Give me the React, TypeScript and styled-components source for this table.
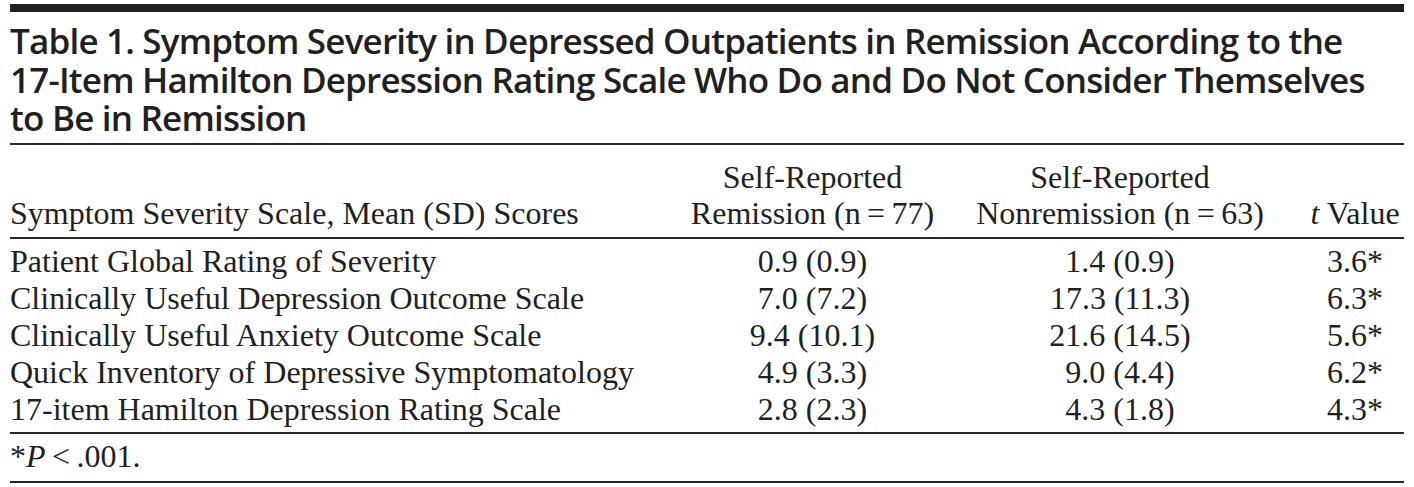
import styled, { createGlobalStyle } from "styled-components";

// page reset
const GlobalStyle = createGlobalStyle`
  html, body {
    margin: 0;
    padding: 0;
    background: #ffffff;
  }
`;

const Page = styled.div`
  padding: 4px 10px 0;
  color: #231f20;
`;

const TopBar = styled.div`
  height: 8px;
  background: #231f20;
`;

const Title = styled.h1`
  margin: 10px 0 0;
  padding-bottom: 5.5px;
  font-family: "Open Sans", "Liberation Sans", sans-serif;
  font-weight: 600;
  font-size: 35px;
  line-height: 38.5px;
  letter-spacing: -0.8px;
  white-space: nowrap;
  border-bottom: 2px solid #2a2627;
`;

const Table = styled.table`
  width: 100%;
  border-collapse: collapse;
  table-layout: fixed;
  font-family: "Liberation Serif", "Times New Roman", serif;
  font-size: 32px;
  color: #231f20;
`;

const Col = styled.col<{ $w: number }>`
  width: ${(p) => p.$w}px;
`;

const HeadCell = styled.th<{ $align?: string; $padRight?: number }>`
  vertical-align: bottom;
  font-weight: normal;
  line-height: 36px;
  padding: 14px ${(p) => p.$padRight ?? 0}px 6px 0;
  text-align: ${(p) => p.$align ?? "center"};
  border-bottom: 2px solid #2a2627;
  white-space: nowrap;
`;

const Row = styled.tr<{ $first?: boolean; $last?: boolean }>`
  td {
    padding-top: ${(p) => (p.$first ? 3.7 : 0)}px;
    padding-bottom: ${(p) => (p.$last ? 4.3 : 0)}px;
    border-bottom: ${(p) => (p.$last ? "2px solid #2a2627" : "none")};
  }
`;

const Cell = styled.td<{ $align?: string; $padRight?: number }>`
  line-height: 37px;
  padding-left: 0;
  padding-right: ${(p) => p.$padRight ?? 0}px;
  text-align: ${(p) => p.$align ?? "center"};
  white-space: nowrap;
`;

const Note = styled.div`
  font-family: "Liberation Serif", "Times New Roman", serif;
  font-size: 32px;
  line-height: 37px;
  padding: 3.7px 0 6.3px;
  border-bottom: 2px solid #2a2627;
`;

const rows = [
  ["Patient Global Rating of Severity", "0.9 (0.9)", "1.4 (0.9)", "3.6*"],
  ["Clinically Useful Depression Outcome Scale", "7.0 (7.2)", "17.3 (11.3)", "6.3*"],
  ["Clinically Useful Anxiety Outcome Scale", "9.4 (10.1)", "21.6 (14.5)", "5.6*"],
  ["Quick Inventory of Depressive Symptomatology", "4.9 (3.3)", "9.0 (4.4)", "6.2*"],
  ["17-item Hamilton Depression Rating Scale", "2.8 (2.3)", "4.3 (1.8)", "4.3*"],
];

export default function App() {
  return (
    <Page>
      <GlobalStyle />
      <TopBar />
      <Title>
        Table 1. Symptom Severity in Depressed Outpatients in Remission According to the
        <br />
        17-Item Hamilton Depression Rating Scale Who Do and Do Not Consider Themselves
        <br />
        to Be in Remission
      </Title>
      <Table>
        <colgroup>
          <Col $w={670} />
          <Col $w={265} />
          <Col $w={361} />
          <Col $w={98} />
        </colgroup>
        <thead>
          <tr>
            <HeadCell $align="left">Symptom Severity Scale, Mean (SD) Scores</HeadCell>
            <HeadCell>
              Self-Reported
              <br />
              Remission (n{"\u2009"}={"\u2009"}77)
            </HeadCell>
            <HeadCell $padRight={11}>
              Self-Reported
              <br />
              Nonremission (n{"\u2009"}={"\u2009"}63)
            </HeadCell>
            <HeadCell>
              <i>t</i> Value
            </HeadCell>
          </tr>
        </thead>
        <tbody>
          {rows.map((r, i) => (
            <Row key={r[0]} $first={i === 0} $last={i === rows.length - 1}>
              <Cell $align="left">{r[0]}</Cell>
              <Cell>{r[1]}</Cell>
              <Cell $padRight={11}>{r[2]}</Cell>
              <Cell>{r[3]}</Cell>
            </Row>
          ))}
        </tbody>
      </Table>
      <Note>
        *<i>P</i>{"\u2009"}&lt;{"\u2009"}.001.
      </Note>
    </Page>
  );
}
